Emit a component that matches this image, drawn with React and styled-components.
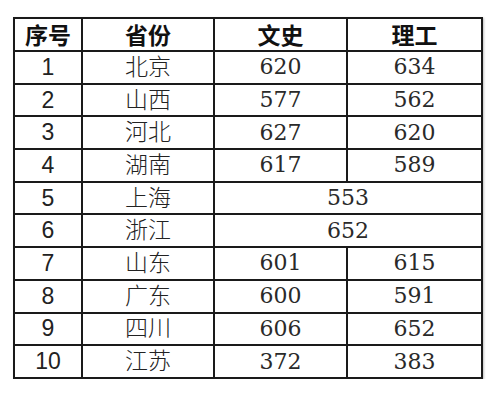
import React from 'react'
import styled, { createGlobalStyle } from 'styled-components'

const Global = createGlobalStyle`
  html, body {
    margin: 0;
    padding: 0;
    background: #fff;
  }
  body {
    font-family: "Noto Sans CJK SC", "Liberation Sans", sans-serif;
    color: #111;
  }
`

const Page = styled.div`
  padding: 17px 0 0 13px;
`

const Table = styled.table`
  border-collapse: collapse;
  table-layout: fixed;
  width: 468px;
  box-shadow: 1px 1px 2px rgba(0, 0, 0, 0.25);
`

const Col = styled.col`
  width: ${p => p.$w}px;
`

const Head = styled.th`
  height: 31px;
  padding: 0;
  border: 2px solid #1a1a1a;
  font-family: "Noto Sans CJK SC", sans-serif;
  font-weight: 700;
  font-size: 23px;
  line-height: 1;
  text-align: center;
`

const Cell = styled.td`
  height: 30.7px;
  padding: 0;
  border: 2px solid #1a1a1a;
  text-align: center;
  line-height: 1;
  font-size: 23px;
  font-family: "Liberation Sans", "Noto Sans CJK SC", sans-serif;
  font-weight: 300;
  color: #222;
`

const Score = styled(Cell)`
  font-size: 22px;
  font-family: "DejaVu Serif", serif;
  font-weight: 400;
  color: #2a2a2a;
`

const rows = [
  [1, '北京', 620, 634],
  [2, '山西', 577, 562],
  [3, '河北', 627, 620],
  [4, '湖南', 617, 589],
  [5, '上海', 553],
  [6, '浙江', 652],
  [7, '山东', 601, 615],
  [8, '广东', 600, 591],
  [9, '四川', 606, 652],
  [10, '江苏', 372, 383],
]

export default function App() {
  return (
    <>
      <Global />
      <Page>
        <Table>
          <colgroup>
            <Col $w={68} />
            <Col $w={132} />
            <Col $w={133} />
            <Col $w={135} />
          </colgroup>
          <thead>
            <tr>
              <Head>序号</Head>
              <Head>省份</Head>
              <Head>文史</Head>
              <Head>理工</Head>
            </tr>
          </thead>
          <tbody>
            {rows.map(([n, name, a, b]) => (
              <tr key={n}>
                <Cell>{n}</Cell>
                <Cell>{name}</Cell>
                {b === undefined ? (
                  <Score colSpan={2}>{a}</Score>
                ) : (
                  <>
                    <Score>{a}</Score>
                    <Score>{b}</Score>
                  </>
                )}
              </tr>
            ))}
          </tbody>
        </Table>
      </Page>
    </>
  )
}
